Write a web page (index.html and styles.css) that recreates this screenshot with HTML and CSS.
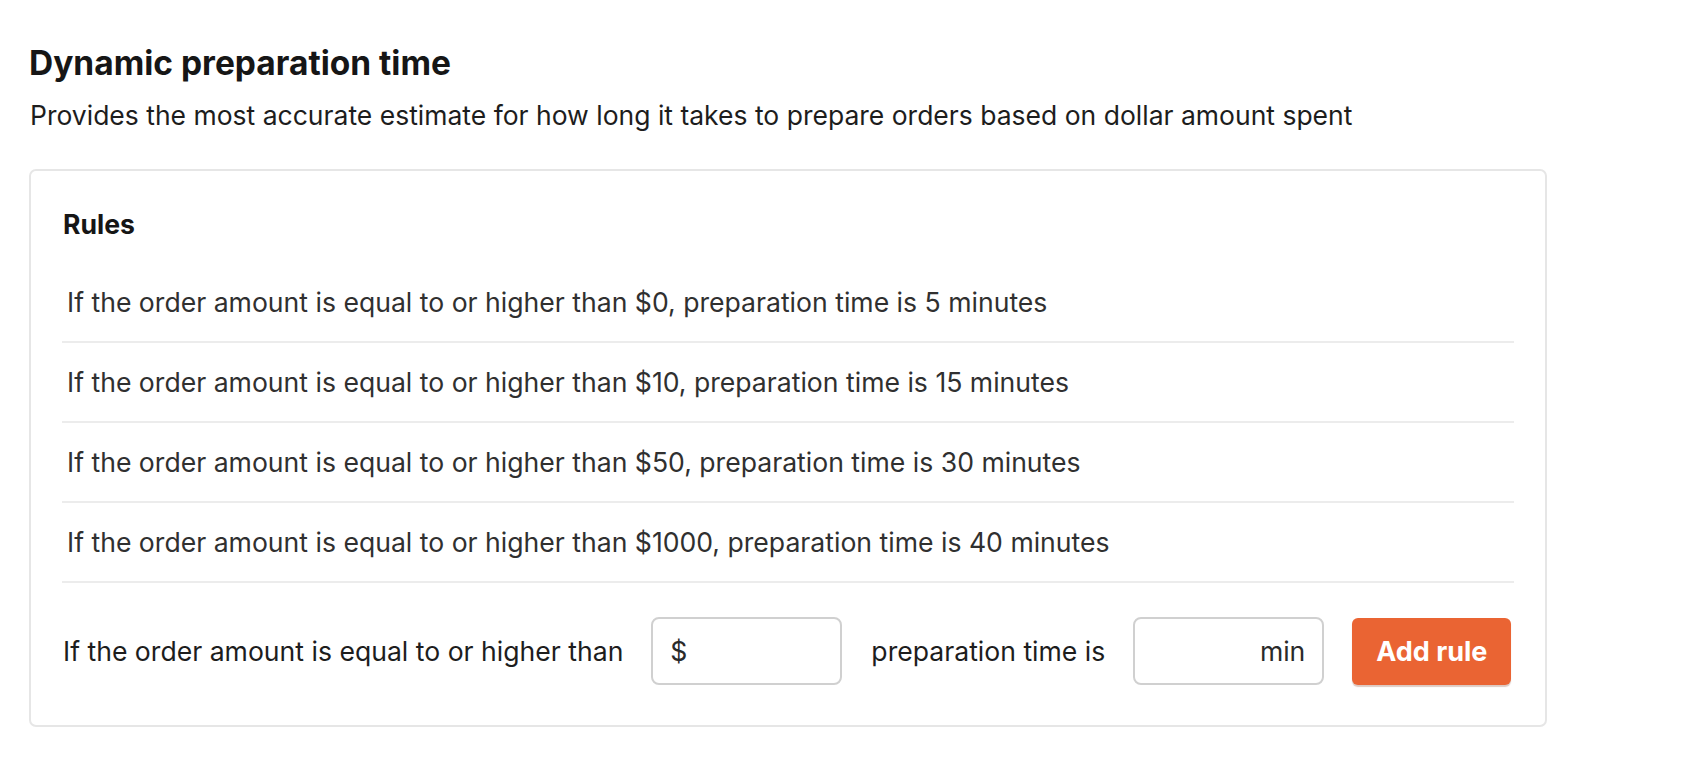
FILE: index.html
```html
<!DOCTYPE html>
<html lang="en">
<head>
<meta charset="utf-8">
<title>Dynamic preparation time</title>
<link rel="stylesheet" href="styles.css">
</head>
<body>
<main class="page">
  <h1 class="title">Dynamic preparation time</h1>
  <p class="subtitle">Provides the most accurate estimate for how long it takes to prepare orders based on dollar amount spent</p>
  <section class="card">
    <h2 class="card-heading">Rules</h2>
    <ul class="rules">
      <li class="rule">If the order amount is equal to or higher than $0, preparation time is 5 minutes</li>
      <li class="rule">If the order amount is equal to or higher than $10, preparation time is 15 minutes</li>
      <li class="rule">If the order amount is equal to or higher than $50, preparation time is 30 minutes</li>
      <li class="rule">If the order amount is equal to or higher than $1000, preparation time is 40 minutes</li>
    </ul>
    <form class="add-form">
      <span class="form-label">If the order amount is equal to or higher than</span>
      <label class="field field-left"><span class="affix">$</span><input class="field-input" type="text"></label>
      <span class="form-label">preparation time is</span>
      <label class="field field-right"><input class="field-input align-right" type="text"><span class="affix">min</span></label>
      <button class="btn" type="button">Add rule</button>
    </form>
  </section>
</main>
</body>
</html>
```
FILE: styles.css
```css
* { box-sizing: border-box; }
html, body { margin: 0; padding: 0; background: #ffffff; }
body {
  font-family: Inter, "Noto Sans", "Liberation Sans", sans-serif;
  color: #1d1d1d;
}
.page {
  padding: 43px 29px 40px 29px;
}
.title {
  margin: 0;
  font-size: 33.5px;
  line-height: 40px;
  font-weight: 700;
  color: #161616;
}
.subtitle {
  margin: 16px 0 0 1px;
  font-size: 26.5px;
  line-height: 32px;
  color: #1d1d1d;
}
.card {
  margin-top: 38px;
  width: 1518px;
  border: 2px solid #e6e6e6;
  border-radius: 7px;
  padding: 38px 31px 40px 31px;
}
.card-heading {
  margin: 0;
  font-size: 26.6px;
  line-height: 30px;
  font-weight: 700;
  color: #161616;
  padding-left: 1px;
}
.rules {
  list-style: none;
  margin: 24px 0 0 0;
  padding: 0;
}
.rule {
  height: 80px;
  display: flex;
  align-items: center;
  padding-left: 5px;
  border-bottom: 2px solid #ececec;
  font-size: 26.6px;
  line-height: 32px;
  color: #303030;
}
.add-form {
  margin-top: 34px;
  display: flex;
  align-items: center;
  gap: 28px;
}
.form-label {
  flex-shrink: 0;
  white-space: nowrap;
  font-size: 26.6px;
  line-height: 32px;
  color: #1d1d1d;
  padding-left: 1px;
}
.field {
  flex-shrink: 0;
  width: 191px;
  height: 68px;
  border: 2px solid #d0d0d0;
  border-radius: 8px;
  display: flex;
  align-items: center;
  padding: 0 17px;
  font-size: 26.6px;
  color: #2a2a2a;
}
.field-input {
  flex: 1;
  min-width: 0;
  border: 0;
  outline: 0;
  padding: 0;
  font: inherit;
  background: transparent;
}
.align-right { text-align: right; }
.btn {
  flex-shrink: 0;
  width: 159px;
  height: 67px;
  border: 0;
  border-radius: 6px;
  background: #ea6433;
  color: #ffffff;
  font-family: inherit;
  font-size: 27px;
  font-weight: 700;
  box-shadow: 0 2px 1px rgba(120, 40, 10, 0.25);
  cursor: pointer;
}
```
